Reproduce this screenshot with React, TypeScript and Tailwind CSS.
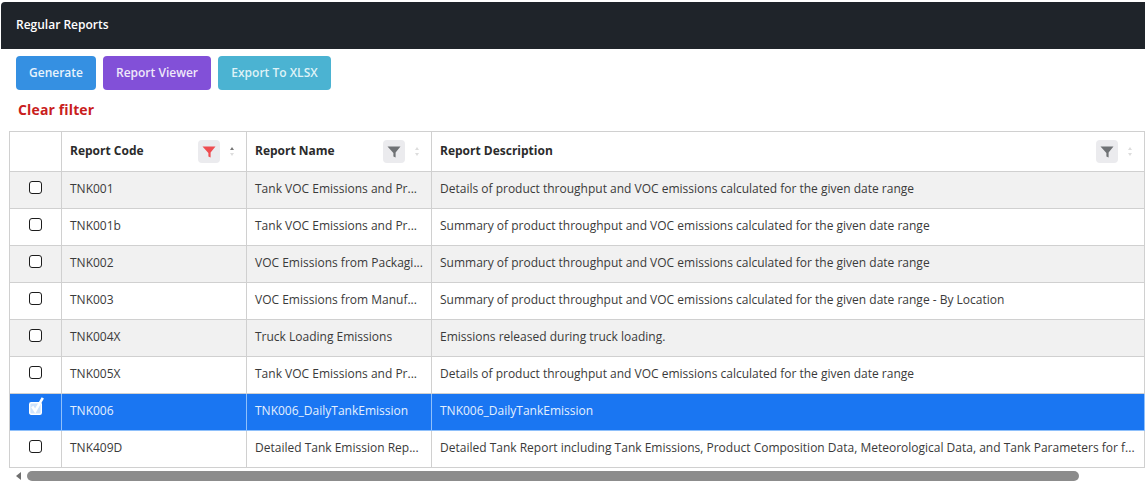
import React from "react"

const rows = [
  { code: "TNK001", name: "Tank VOC Emissions and Pr...", desc: "Details of product throughput and VOC emissions calculated for the given date range" },
  { code: "TNK001b", name: "Tank VOC Emissions and Pr...", desc: "Summary of product throughput and VOC emissions calculated for the given date range" },
  { code: "TNK002", name: "VOC Emissions from Packagi...", desc: "Summary of product throughput and VOC emissions calculated for the given date range" },
  { code: "TNK003", name: "VOC Emissions from Manuf...", desc: "Summary of product throughput and VOC emissions calculated for the given date range - By Location" },
  { code: "TNK004X", name: "Truck Loading Emissions", desc: "Emissions released during truck loading." },
  { code: "TNK005X", name: "Tank VOC Emissions and Pr...", desc: "Details of product throughput and VOC emissions calculated for the given date range" },
  { code: "TNK006", name: "TNK006_DailyTankEmission", desc: "TNK006_DailyTankEmission", selected: true },
  { code: "TNK409D", name: "Detailed Tank Emission Rep...", desc: "Detailed Tank Report including Tank Emissions, Product Composition Data, Meteorological Data, and Tank Parameters for f..." },
]

function HeaderCell({ title, active, grow, width }: { title: string; active?: boolean; grow?: boolean; width?: string }) {
  return (
    <div className={`${grow ? "flex-1" : width} flex items-center border-r border-[#d0d0d0] pr-3 pl-2`}>
      <span className="flex-1 pb-[2px] text-[12px] font-bold text-[#2b2b2b]">{title}</span>
      <span className="flex h-[23px] w-[22px] items-center justify-center rounded bg-[#ebebee]">
        <svg width="14" height="12" viewBox="0 0 14 12">
          <path d="M0.5 0.5h13L8.6 6.4V11.5L6.4 10.4V6.9z" fill={active ? "#ee4c50" : "#6f7275"} />
        </svg>
      </span>
      <span className="ml-[9px] flex w-[5px] flex-col items-center gap-[3px]">
        <span className={`h-0 w-0 border-x-[2.5px] border-b-[3px] border-x-transparent ${active ? "border-b-[#777]" : "border-b-[#dddddd]"}`} />
        <span className="h-0 w-0 border-x-[2.5px] border-t-[3px] border-x-transparent border-t-[#dddddd]" />
      </span>
    </div>
  )
}

function Checkbox({ checked }: { checked?: boolean }) {
  if (checked) {
    return (
      <svg width="16" height="18" viewBox="0 0 16 18" className="mb-[12px] ml-[3px]">
        <rect x="0.7" y="5.7" width="11.6" height="11.6" rx="1.5" fill="#cfe3fb" stroke="#ffffff" strokeWidth="1.4" />
        <path d="M3.2 9.5l3 4.5L13.8 0.8" fill="none" stroke="#ffffff" strokeWidth="2.6" />
      </svg>
    )
  }
  return <span className="mr-px mb-[5px] block h-[13px] w-[13px] rounded-[3px] border-[1.5px] border-[#1c1c1c] bg-white" />
}

export default function App() {
  return (
    <div className="h-[489px] w-[1145px] overflow-hidden bg-white pt-[2px] font-['Open_Sans','Noto_Sans',sans-serif]">
      <div className="ml-px flex h-[47px] items-center rounded-tl-sm bg-[#1f242a] pb-[2px] pl-[15px] text-[12px] font-semibold text-white">
        Regular Reports
      </div>

      <div className="mt-[7px] flex gap-[7px] pl-4">
        <button className="h-[34px] w-20 rounded bg-[#3590e2] text-[12px] font-semibold text-[#e8f3fc]">Generate</button>
        <button className="h-[34px] w-[108px] rounded bg-[#8250d8] text-[12px] font-semibold text-[#efe8fa]">Report Viewer</button>
        <button className="h-[34px] w-[113px] rounded bg-[#4bb3d2] text-[12px] font-semibold text-[#dff2f7]">Export To XLSX</button>
      </div>

      <div className="mt-[10px] pl-[18px] text-[14px] leading-[20px] font-bold tracking-[0.01em] text-[#c9201c]">Clear filter</div>

      <div className="mt-[11px] ml-[9px] border-t border-l border-[#d0d0d0]">
        <div className="flex h-[40px] border-b border-[#d0d0d0] bg-white">
          <div className="w-[52px] border-r border-[#d0d0d0]" />
          <HeaderCell title="Report Code" active width="w-[185px]" />
          <HeaderCell title="Report Name" width="w-[185px]" />
          <HeaderCell title="Report Description" grow />
        </div>

        {rows.map((row, i) => (
          <div
            key={row.code}
            className={`flex h-[37px] border-b text-[12px] ${
              row.selected
                ? "border-[#8fc0fb] bg-[#1a76f2] text-[#e4f0fe]"
                : `border-[#d0d0d0] text-[#3a3a3a] ${i % 2 === 0 ? "bg-[#f1f1f1]" : "bg-white"}`
            }`}
          >
            <div className={`flex w-[52px] items-center justify-center border-r ${row.selected ? "border-[#8fc0fb]" : "border-[#d0d0d0]"}`}>
              <Checkbox checked={row.selected} />
            </div>
            <div className={`flex w-[185px] items-center border-r pb-[2px] pl-2 ${row.selected ? "border-[#8fc0fb]" : "border-[#d0d0d0]"}`}>{row.code}</div>
            <div className={`flex w-[185px] items-center border-r pb-[2px] pl-2 whitespace-nowrap ${row.selected ? "border-[#8fc0fb]" : "border-[#d0d0d0]"}`}>{row.name}</div>
            <div className={`flex flex-1 items-center border-r pb-[2px] pl-2 whitespace-nowrap ${row.selected ? "border-[#8fc0fb]" : "border-[#d0d0d0]"}`}>{row.desc}</div>
          </div>
        ))}
      </div>

      <div className="mt-[3px] flex h-[10px] items-center pl-4">
        <span className="h-0 w-0 border-y-[4px] border-r-[5px] border-y-transparent border-r-[#6f6f6f]" />
        <span className="ml-[6px] h-[10px] w-[1052px] rounded-full bg-[#8c8c8c]" />
      </div>
    </div>
  )
}
